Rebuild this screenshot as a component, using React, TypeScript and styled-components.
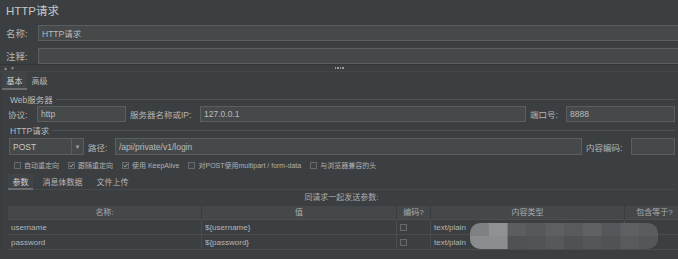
import React from 'react'
import styled, { createGlobalStyle } from 'styled-components'

const GlobalStyle = createGlobalStyle`
  html, body {
    margin: 0;
    padding: 0;
    background: #3c3f41;
  }
  body {
    font-family: 'Liberation Sans', 'Noto Sans CJK SC', sans-serif;
    color: #bbbbbb;
  }
`

const Root = styled.div`
  position: relative;
  width: 678px;
  height: 259px;
  overflow: hidden;
  background: #3c3f41;
`

const Title = styled.div`
  height: 22px;
  line-height: 22px;
  padding-left: 6px;
  font-size: 11.5px;
  color: #c4c6c8;
`

const TopRow = styled.div<{ $mt: number }>`
  display: flex;
  align-items: center;
  height: 16px;
  margin-top: ${p => p.$mt}px;
  padding-left: 6px;
  margin-right: -3px;
`

const TopLabel = styled.span`
  width: 32px;
  flex: 0 0 32px;
  font-size: 9.5px;
  color: #b3b5b7;
`

const Field = styled.div<{ $w?: number }>`
  box-sizing: border-box;
  height: 100%;
  flex: ${p => (p.$w ? `0 0 ${p.$w}px` : '1 1 0')};
  background: #45494a;
  border: 1px solid #5a5e60;
  padding-left: 3px;
  display: flex;
  align-items: center;
  font-size: 8.5px;
  color: #bbbbbb;
  white-space: nowrap;
  overflow: hidden;
`

const SplitBar = styled.div`
  box-sizing: border-box;
  position: relative;
  height: 8px;
  border-top: 1px solid #323436;
  border-bottom: 1px solid #45484b;
  display: flex;
  align-items: center;
  justify-content: center;
  gap: 1px;
`

const Dot = styled.span`
  width: 1.5px;
  height: 2px;
  background: #9a9c9e;
`

const Arrows = styled.div`
  position: absolute;
  left: 3px;
  top: 0;
  display: flex;
  gap: 2px;
  font-size: 5px;
  color: #8d9092;
  line-height: 6px;
`

const TabBar = styled.div<{ $h: number; $line?: boolean }>`
  display: flex;
  align-items: stretch;
  height: ${p => p.$h}px;
  box-sizing: border-box;
  border-bottom: ${p => (p.$line ? '1px solid #46494c' : 'none')};
`

const Tab = styled.div<{ $active?: boolean; $gap: number }>`
  box-sizing: border-box;
  display: flex;
  align-items: center;
  padding: 0 4.5px;
  margin-right: ${p => p.$gap}px;
  font-size: 8px;
  color: ${p => (p.$active ? '#d0d2d4' : '#b5b7b9')};
  background: ${p => (p.$active ? '#414447' : 'transparent')};
  border-bottom: 2px solid ${p => (p.$active ? '#6a6e71' : 'transparent')};
  margin-bottom: -1px;
`

const Panel = styled.div`
  position: relative;
  padding: 0 3px 0 7px;
  border-left: 1px solid #393b3d;
`

const Legend = styled.div<{ $mt: number }>`
  display: flex;
  align-items: center;
  height: 14px;
  margin-top: ${p => p.$mt}px;
  padding-left: 2px;
  font-size: 8.5px;
  color: #b9bbbd;
  &::after {
    content: '';
    flex: 1;
    height: 1px;
    margin-left: 3px;
    background: #4e5154;
  }
`

const FormRow = styled.div<{ $h: number; $mt?: number }>`
  display: flex;
  align-items: center;
  height: ${p => p.$h}px;
  margin-top: ${p => p.$mt ?? 0}px;
`

const Label = styled.span<{ $w: number; $pl?: number }>`
  flex: 0 0 ${p => p.$w}px;
  padding-left: ${p => p.$pl ?? 0}px;
  box-sizing: border-box;
  font-size: 8.5px;
  color: #b3b5b7;
  white-space: nowrap;
`

const Select = styled.div`
  box-sizing: border-box;
  flex: 0 0 75px;
  height: 100%;
  margin-left: 1px;
  display: flex;
  background: #45494a;
  border: 1px solid #5a5e60;
  font-size: 8.5px;
  color: #c8cacc;
`

const SelectValue = styled.span`
  flex: 1;
  display: flex;
  align-items: center;
  padding-left: 3px;
  border-right: 1px solid #5a5e60;
`

const SelectArrow = styled.span`
  flex: 0 0 11px;
  display: flex;
  align-items: center;
  justify-content: center;
  font-size: 6px;
  color: #a0a2a4;
`

const CheckRow = styled.div`
  display: flex;
  align-items: center;
  height: 10px;
  margin-top: 5px;
  padding-left: 6px;
`

const CheckItem = styled.label`
  display: flex;
  align-items: center;
  gap: 3px;
  margin-right: 9px;
  font-size: 7px;
  color: #aeb0b2;
  white-space: nowrap;
`

const Box = styled.span`
  box-sizing: border-box;
  width: 7px;
  height: 7px;
  flex: 0 0 7px;
  border: 1px solid #65696b;
  background: #404346;
  display: flex;
  align-items: center;
  justify-content: center;
`

const Caption = styled.div`
  height: 16px;
  line-height: 16px;
  text-align: center;
  font-size: 8px;
  color: #a9abad;
`

const Table = styled.div`
  display: grid;
  grid-template-columns: 194px 195px 34px 194px 60px;
  margin-right: -10px;
`

const HeadCell = styled.div`
  height: 14px;
  line-height: 14px;
  background: #45484b;
  border-right: 1px solid #3a3d40;
  border-bottom: 1px solid #4c4f52;
  text-align: center;
  font-size: 8px;
  color: #a9abad;
  white-space: nowrap;
  overflow: hidden;
  box-sizing: border-box;
`

const Cell = styled.div`
  box-sizing: border-box;
  height: 15px;
  display: flex;
  align-items: center;
  padding-left: 3px;
  border-right: 1px solid #4a4d50;
  border-bottom: 1px solid #4a4d50;
  font-size: 8px;
  color: #b3b5b7;
  white-space: nowrap;
  overflow: hidden;
`

/* pixelated blur that hides the right part of the rows, as in the screenshot */
const Mosaic = styled.svg`
  position: absolute;
  left: 469px;
  bottom: 1px;
  display: block;
`

const tiles = [
  '#7e8183', '#8f9193', '#5b5e61', '#56595c', '#5d6063', '#585b5e', '#5f6265', '#55585b', '#5e6164', '#5a5d60',
  '#8a8c8e', '#8b8d8f', '#4f5255', '#515457', '#56595c', '#4f5255', '#54575a', '#505356', '#585b5e', '#54575a',
]

function Check({ checked, label }: { checked?: boolean; label: string }) {
  return (
    <CheckItem>
      <Box>
        {checked && (
          <svg width="5" height="5" viewBox="0 0 10 10">
            <path d="M1.5 5.2 L4 7.8 L8.8 2" stroke="#c9cbcd" strokeWidth="1.6" fill="none" />
          </svg>
        )}
      </Box>
      {label}
    </CheckItem>
  )
}

const params = [
  { name: 'username', value: '${username}' },
  { name: 'password', value: '${password}' },
]

export default function App() {
  return (
    <Root>
      <GlobalStyle />
      <Title>HTTP请求</Title>
      <TopRow $mt={3}>
        <TopLabel>名称:</TopLabel>
        <Field>HTTP请求</Field>
      </TopRow>
      <TopRow $mt={7}>
        <TopLabel>注释:</TopLabel>
        <Field />
      </TopRow>
      <SplitBar>
        <Arrows>
          <span>▲</span>
          <span>▼</span>
        </Arrows>
        <Dot />
        <Dot />
        <Dot />
        <Dot />
      </SplitBar>
      <TabBar $h={17}>
        <Tab $active $gap={0} style={{ marginLeft: 2 }}>基本</Tab>
        <Tab $gap={0}>高级</Tab>
      </TabBar>
      <Panel>
        <Legend $mt={3}>Web服务器</Legend>
        <FormRow $h={16}>
          <Label $w={29}>协议:</Label>
          <Field $w={89}>http</Field>
          <Label $w={74} $pl={4}>服务器名称或IP:</Label>
          <Field>127.0.0.1</Field>
          <Label $w={40} $pl={4}>端口号:</Label>
          <Field $w={109}>8888</Field>
        </FormRow>
        <Legend $mt={1}>HTTP请求</Legend>
        <FormRow $h={17} $mt={1}>
          <Select>
            <SelectValue>POST</SelectValue>
            <SelectArrow>▼</SelectArrow>
          </Select>
          <Label $w={31} $pl={4}>路径:</Label>
          <Field>/api/private/v1/login</Field>
          <Label $w={49} $pl={4}>内容编码:</Label>
          <Field $w={44} />
        </FormRow>
        <CheckRow>
          <Check label="自动重定向" />
          <Check checked label="跟随重定向" />
          <Check checked label="使用 KeepAlive" />
          <Check label="对POST使用multipart / form-data" />
          <Check label="与浏览器兼容的头" />
        </CheckRow>
        <TabBar $h={16} $line style={{ marginTop: 4 }}>
          <Tab $active $gap={5}>参数</Tab>
          <Tab $gap={5}>消息体数据</Tab>
          <Tab $gap={0}>文件上传</Tab>
        </TabBar>
        <Caption>同请求一起发送参数:</Caption>
        <Table>
          <HeadCell>名称:</HeadCell>
          <HeadCell>值</HeadCell>
          <HeadCell>编码?</HeadCell>
          <HeadCell>内容类型</HeadCell>
          <HeadCell>包含等于?</HeadCell>
          {params.map(p => (
            <React.Fragment key={p.name}>
              <Cell>{p.name}</Cell>
              <Cell>{p.value}</Cell>
              <Cell>
                <Box />
              </Cell>
              <Cell>text/plain</Cell>
              <Cell>
                <Box />
              </Cell>
            </React.Fragment>
          ))}
        </Table>
        <Mosaic width="188" height="26" viewBox="0 0 188 26">
          <defs>
            <clipPath id="blob">
              <rect x="0" y="0" width="188" height="26" rx="10" />
            </clipPath>
          </defs>
          <g clipPath="url(#blob)">
            {tiles.map((c, i) => (
              <rect key={i} x={(i % 10) * 18.8} y={Math.floor(i / 10) * 13} width="19.3" height="13.5" fill={c} />
            ))}
          </g>
        </Mosaic>
      </Panel>
    </Root>
  )
}
